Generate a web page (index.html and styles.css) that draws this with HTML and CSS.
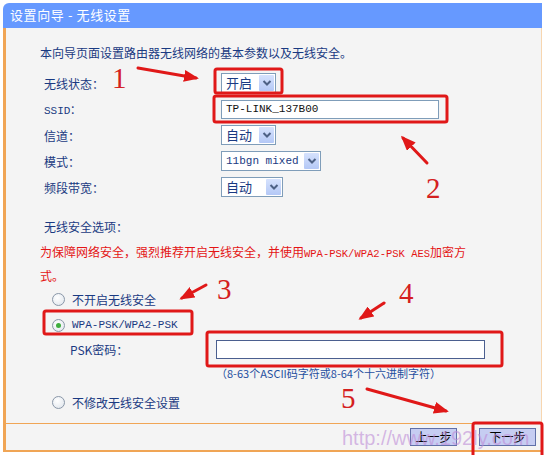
FILE: index.html
```html
<!DOCTYPE html>
<html lang="zh-CN">
<head>
    <meta charset="UTF-8">
    <title>设置向导 - 无线设置</title>
    <link rel="stylesheet" href="styles.css">
</head>
<body>
    <div class="wizard">
        <div class="title">设置向导 - 无线设置</div>
        <div class="panel">
            <p class="intro">本向导页面设置路由器无线网络的基本参数以及无线安全。</p>

            <div class="row">
                <span class="label">无线状态：</span>
                <span class="sel w53"><span class="val">开启</span><span class="drop"><svg width="10" height="8" viewBox="0 0 10 8"><path d="M1.5 2 L5 5.5 L8.5 2" fill="none" stroke="#4d6185" stroke-width="2"/></svg></span></span>
            </div>
            <div class="row">
                <span class="label mono">SSID：</span>
                <span class="text-input ssid">TP-LINK_137B00</span>
            </div>
            <div class="row">
                <span class="label">信道：</span>
                <span class="sel w53"><span class="val">自动</span><span class="drop"><svg width="10" height="8" viewBox="0 0 10 8"><path d="M1.5 2 L5 5.5 L8.5 2" fill="none" stroke="#4d6185" stroke-width="2"/></svg></span></span>
            </div>
            <div class="row">
                <span class="label">模式：</span>
                <span class="sel w98"><span class="val mono">11bgn mixed</span><span class="drop"><svg width="10" height="8" viewBox="0 0 10 8"><path d="M1.5 2 L5 5.5 L8.5 2" fill="none" stroke="#4d6185" stroke-width="2"/></svg></span></span>
            </div>
            <div class="row">
                <span class="label">频段带宽：</span>
                <span class="sel w60"><span class="val">自动</span><span class="drop"><svg width="10" height="8" viewBox="0 0 10 8"><path d="M1.5 2 L5 5.5 L8.5 2" fill="none" stroke="#4d6185" stroke-width="2"/></svg></span></span>
            </div>

            <p class="section">无线安全选项：</p>
            <p class="warn">为保障网络安全，强烈推荐开启无线安全，并使用<span class="mono">WPA-PSK/WPA2-PSK AES</span>加密方式。</p>

            <div class="radio-row">
                <span class="radio"></span>
                <span>不开启无线安全</span>
            </div>
            <div class="radio-row">
                <span class="radio on"></span>
                <span class="mono">WPA-PSK/WPA2-PSK</span>
            </div>
            <div class="psk-row">
                <span class="psk-label">PSK密码：</span>
                <span class="text-input psk"></span>
            </div>
            <p class="hint">（8-63个ASCII码字符或8-64个十六进制字符）</p>
            <div class="radio-row last">
                <span class="radio"></span>
                <span>不修改无线安全设置</span>
            </div>
        </div>
        <div class="footer">
            <button class="btn">上一步</button>
            <button class="btn">下一步</button>
        </div>
    </div>

    <!-- red annotations drawn over the screenshot -->
    <svg class="notes" width="545" height="455" viewBox="0 0 545 455">
        <defs>
            <marker id="head" markerWidth="5" markerHeight="4" refX="4" refY="2" orient="auto">
                <path d="M0 0 L5 2 L0 4 Z" fill="#e01818"/>
            </marker>
        </defs>
        <g fill="none" stroke="#e01818" stroke-width="3">
            <rect x="215" y="69" width="67" height="24" rx="2"/>
            <rect x="214" y="96" width="233" height="26" rx="2"/>
            <rect x="44" y="311" width="148" height="23" rx="2"/>
            <rect x="207" y="332" width="295" height="34" rx="2"/>
            <rect x="473" y="423" width="69" height="34" rx="2"/>
        </g>
        <g stroke="#e01818" stroke-width="3" stroke-linecap="round" marker-end="url(#head)">
            <line x1="138" y1="68" x2="196" y2="78"/>
            <line x1="427" y1="163" x2="403" y2="138"/>
            <line x1="206" y1="285" x2="182" y2="298"/>
            <line x1="384" y1="303" x2="361" y2="318"/>
            <line x1="367" y1="389" x2="446" y2="411"/>
        </g>
        <g class="num" fill="#d42020">
            <text x="112" y="88">1</text>
            <text x="426" y="198">2</text>
            <text x="217" y="299">3</text>
            <text x="399" y="303">4</text>
            <text x="341" y="408">5</text>
        </g>
    </svg>
    <div class="watermark">http://www.192ly.com</div>
</body>
</html>
```

FILE: styles.css
```css
body { margin: 0; background: #fff; position: relative; width: 545px; height: 455px; overflow: hidden;
    font-family: "Noto Sans CJK SC", "DejaVu Sans", sans-serif; font-size: 12px; color: #1a3a82; }
p { margin: 0; }
.mono { font-family: "Liberation Mono", "DejaVu Sans Mono", monospace; font-size: 11px; }

.wizard { margin: 3px 0 0 3px; width: 539px; }
.title { height: 25px; line-height: 24px; padding-left: 7px; background: #6699ff; color: #fff;
    font-size: 13px; letter-spacing: 0.6px; border-radius: 6px 0 0 0; }

.panel { background: #f4f4f4; border-left: 3px solid #f0a555; border-right: 1px solid #f7d6b0;
    padding: 15px 0 8px 34px; }
.intro { line-height: 20px; margin-bottom: 7px; }

.row { display: flex; align-items: center; height: 26px; }
.label { width: 177px; padding-left: 4px; }
.label.mono { font-size: 11px; }

.sel { display: inline-flex; align-items: center; justify-content: space-between; height: 18px;
    border: 1px solid #7f9db9; background: #fff; padding: 0 1px 0 4px; font-size: 13px; }
.sel .val { line-height: 18px; }
.sel .val.mono { font-size: 11px; }
.w53 { width: 48px; }
.w60 { width: 55px; }
.w98 { width: 93px; }
.drop { display: flex; align-items: center; justify-content: center; width: 15px; height: 16px;
    background: linear-gradient(#d6e2fd, #b4c8f6); border-radius: 1px; }

.text-input { display: inline-block; height: 17px; line-height: 17px; border: 1px solid #7f9db9;
    background: #fff; padding-left: 4px; font-family: "Liberation Mono", "DejaVu Sans Mono", monospace;
    font-size: 11px; color: #111; }
.ssid { width: 212px; }

.section { margin-top: 17px; line-height: 20px; padding-left: 4px; }
.warn { margin-top: 4px; line-height: 21px; color: #e41414; width: 440px; }
.warn .mono { font-size: 10.5px; }

.radio-row { display: flex; align-items: center; height: 26px; padding-left: 12px; gap: 7px; }
.radio { width: 11px; height: 11px; border: 1px solid #8a97a8; border-radius: 50%;
    background: radial-gradient(circle at 40% 35%, #fff, #dde3ea); position: relative; }
.radio.on::after { content: ""; position: absolute; left: 3px; top: 3px; width: 5px; height: 5px;
    border-radius: 50%; background: #3fae3f; }
.radio-row .mono { color: #1a3a82; }
.radio-row.last { margin-top: 8px; }

.psk-row { display: flex; align-items: center; height: 22px; padding-left: 30px; }
.psk-label { width: 146px; }
.psk { width: 263px; border-color: #4b5f8f; }

.hint { margin-top: 5px; padding-left: 176px; font-size: 11px; line-height: 16px; color: #1f4fa0; }

.footer { height: 26px; border-top: 1px solid #f0a555; border-bottom: 2px solid #f0a555;
    border-left: 3px solid #f0a555; border-right: 1px solid #f7d6b0; background: #f4f4f4;
    display: flex; justify-content: flex-end; align-items: center; gap: 22px; padding-right: 5px; }
.btn { width: 47px; height: 18px; padding: 0; border: 1px solid #6070a8; background: #c6cdf2;
    font-family: "Noto Sans CJK SC", sans-serif; font-size: 12px; line-height: 16px; color: #000; }
.btn + .btn { width: 57px; }

.notes { position: absolute; left: 0; top: 0; pointer-events: none; }
.num text { font-family: "Liberation Serif", serif; font-size: 29px; }
.watermark { position: absolute; left: 342px; top: 427px; font-family: "Liberation Sans", Arial, sans-serif;
    font-size: 20px; color: rgba(190, 140, 215, 0.6); pointer-events: none; }
```
